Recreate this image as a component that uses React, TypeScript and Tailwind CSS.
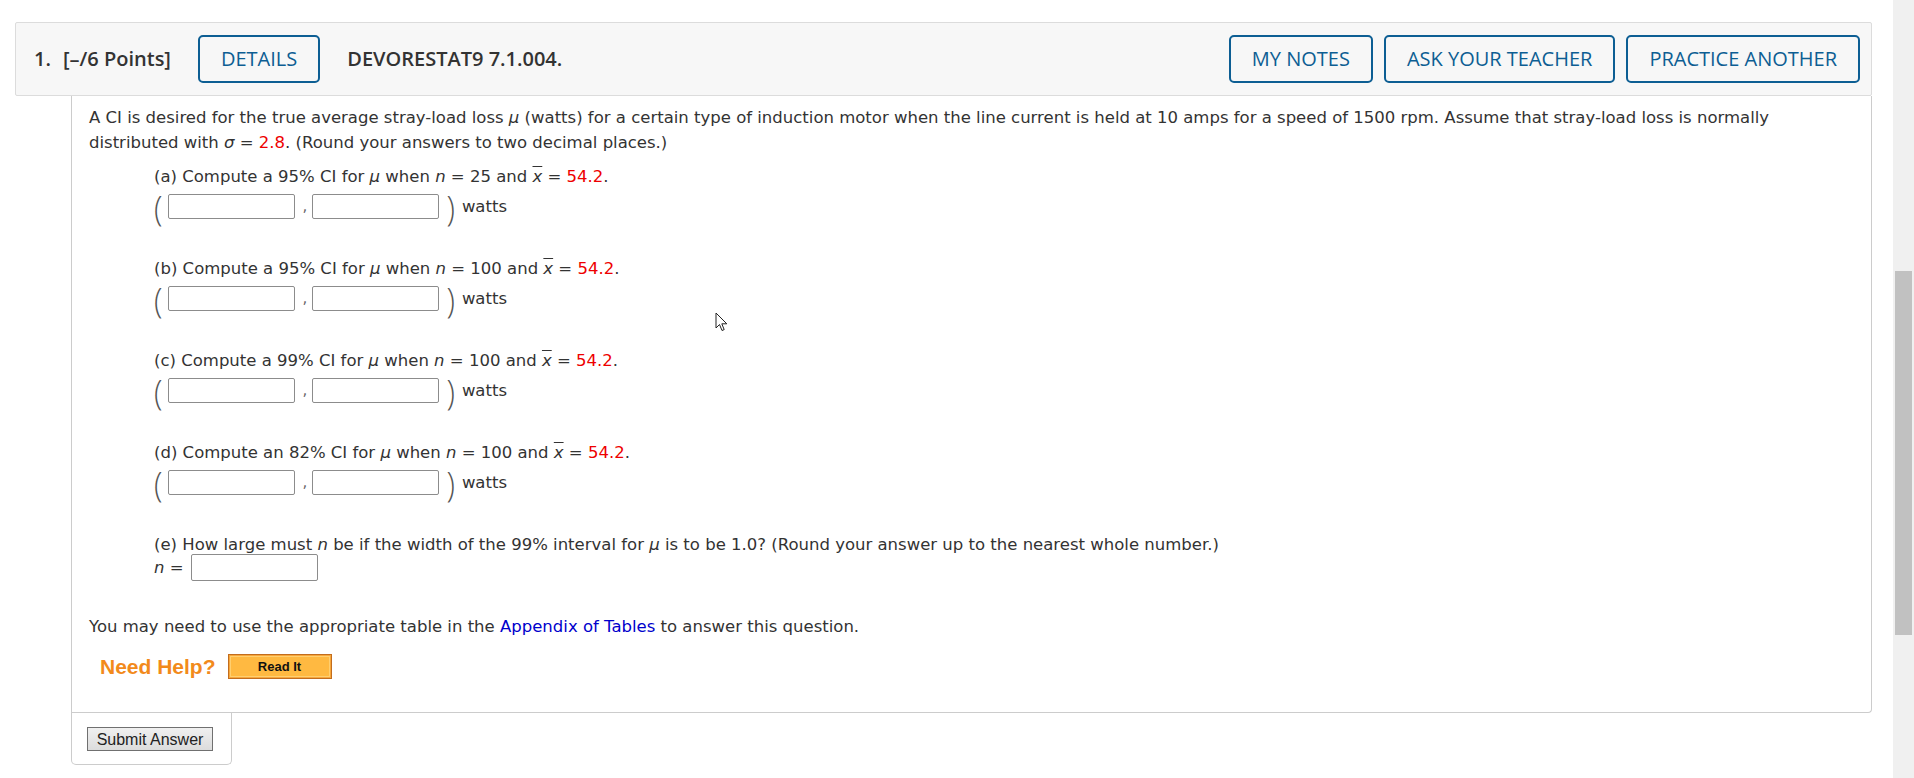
import React from "react";

const Red = ({ children }: { children: React.ReactNode }) => (
  <span className="text-[#ee0000]">{children}</span>
);

const XBar = () => <i className="italic overline">x</i>;

const Field = () => (
  <input
    type="text"
    className="h-[25px] w-[127px] rounded-[2px] border border-[#8c8c8c] bg-white outline-none"
  />
);

const Paren = ({ ch }: { ch: string }) => (
  <span className="block h-[30px] origin-top scale-y-[1.12] font-['Open_Sans',sans-serif] text-[31px] font-light leading-[30px] text-[#555] mt-[-3px]">
    {ch}
  </span>
);

function IntervalRow() {
  return (
    <div className="mt-[5px] flex h-[31px] items-start">
      <Paren ch="(" />
      <div className="ml-[6px]">
        <Field />
      </div>
      <span className="ml-[7px] w-[10px] text-[15px] leading-[25px] text-[#666]">,</span>
      <Field />
      <div className="ml-[7px]">
        <Paren ch=")" />
      </div>
      <span className="ml-[7px] leading-[25px]">watts</span>
    </div>
  );
}

const parts = [
  { label: "(a)", pre: "Compute a 95% CI for", n: "25" },
  { label: "(b)", pre: "Compute a 95% CI for", n: "100" },
  { label: "(c)", pre: "Compute a 99% CI for", n: "100" },
  { label: "(d)", pre: "Compute an 82% CI for", n: "100" },
];

const headBtn =
  "h-[48px] rounded-[5px] border-2 border-[#0d5e93] px-[21px] text-[20px] font-medium text-[#0d5e93] font-['Open_Sans',sans-serif]";

export default function App() {
  return (
    <div className="flex h-[778px] w-full overflow-hidden bg-white">
      <div className="flex-1 pl-[15px] pr-[21px] pt-[22px]">
        {/* question header */}
        <div className="flex h-[74px] items-center rounded-[2px] border border-[#dcdcdc] bg-[#f7f7f7] pl-[18px] pr-[11px] font-['Open_Sans',sans-serif] text-[20px] text-[#333]">
          <span className="font-semibold">1.</span>
          <span className="ml-[12px] font-semibold">[–/6 Points]</span>
          <button className={headBtn + " ml-[27px]"}>DETAILS</button>
          <span className="ml-[27px] font-semibold">DEVORESTAT9 7.1.004.</span>
          <div className="ml-auto flex gap-[11px]">
            <button className={headBtn}>MY NOTES</button>
            <button className={headBtn}>ASK YOUR TEACHER</button>
            <button className={headBtn}>PRACTICE ANOTHER</button>
          </div>
        </div>

        {/* question body */}
        <div className="ml-[56px] font-['DejaVu_Sans',Verdana,sans-serif] text-[16.5px] text-[#333]">
          <div className="relative rounded-br-[4px] border-x border-b border-[#cccccc] pb-[33px] pl-[17px] pr-[20px] pt-[9px] leading-[25px]">
            <p>
              A CI is desired for the true average stray-load loss <i>μ</i> (watts) for a certain type of
              induction motor when the line current is held at 10 amps for a speed of 1500 rpm. Assume
              that stray-load loss is normally distributed with <i>σ</i> = <Red>2.8</Red>. (Round your
              answers to two decimal places.)
            </p>

            <div className="pl-[65px]">
              {parts.map((p, i) => (
                <div key={p.label} className={i === 0 ? "mt-[9px]" : "mt-[31px]"}>
                  <div>
                    {p.label} {p.pre} <i>μ</i> when <i>n</i> = {p.n} and <XBar /> = <Red>54.2</Red>.
                  </div>
                  <IntervalRow />
                </div>
              ))}

              <div className="mt-[31px]">
                <div>
                  (e) How large must <i>n</i> be if the width of the 99% interval for <i>μ</i> is to be
                  1.0? (Round your answer up to the nearest whole number.)
                </div>
                <div className="mt-[-3px] flex h-[27px] items-center">
                  <span>
                    <i>n</i> =
                  </span>
                  <input
                    type="text"
                    className="ml-[7px] h-[27px] w-[127px] rounded-[2px] border border-[#8c8c8c] bg-white outline-none"
                  />
                </div>
              </div>
            </div>

            <p className="mt-[33px]">
              You may need to use the appropriate table in the{" "}
              <a className="text-[#0000cc]">Appendix of Tables</a> to answer this question.
            </p>

            <div className="ml-[11px] mt-[15px] flex h-[25px] items-center">
              <span className="font-['Liberation_Sans',Arial,sans-serif] text-[21px] font-bold text-[#f28a1b]">
                Need Help?
              </span>
              <button className="ml-[12px] h-[25px] w-[104px] border border-[#c26d1e] bg-[#f7a63a] p-px">
                <span className="flex h-full w-full items-center justify-center border border-[#ffcf70] bg-[#ffb941] font-['Liberation_Sans',Arial,sans-serif] text-[13px] font-bold text-[#111]">
                  Read It
                </span>
              </button>
            </div>

            {/* mouse pointer */}
            <svg
              className="absolute left-[643px] top-[216px]"
              width="14"
              height="21"
              viewBox="0 0 14 21"
            >
              <path
                d="M1 1 L1 16 L4.5 12.5 L7 18.5 L9.2 17.6 L6.8 11.8 L11.8 11.8 Z"
                fill="#fff"
                stroke="#222"
                strokeWidth="1"
                strokeLinejoin="round"
              />
            </svg>
          </div>

          <div className="-mt-px w-[161px] rounded-b-[5px] border-x border-b border-[#cccccc] bg-white pb-[11px] pl-[15px] pt-[15px]">
            <button className="h-[24px] w-[126px] border border-[#707070] bg-gradient-to-b from-[#f0f0f0] to-[#dcdcdc] font-['Liberation_Sans',Arial,sans-serif] text-[16px] text-[#222]">
              Submit Answer
            </button>
          </div>
        </div>
      </div>

      {/* scrollbar */}
      <div className="h-[778px] w-[21px] bg-[#f0f0f0] px-[2px]">
        <div className="mt-[271px] h-[364px] w-[17px] bg-[#c1c1c1]" />
      </div>
    </div>
  );
}
